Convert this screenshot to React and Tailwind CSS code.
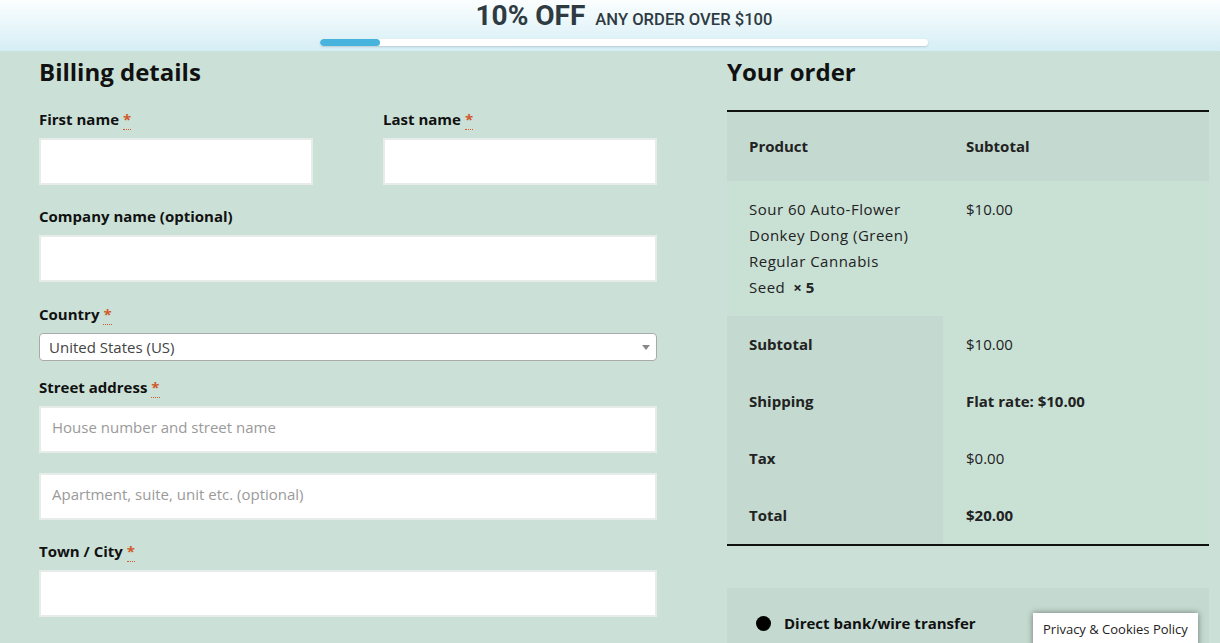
import React from "react";

const font = { fontFamily: '"Open Sans", "Liberation Sans", sans-serif' };

function Label({ children, req }) {
  return (
    <label className="block text-[15px] font-bold text-[#111] leading-[20px] mb-[9px]">
      {children}
      {req && (
        <span className="text-[#d1592a] ml-[4px] border-b border-dotted border-[#d1592a] leading-none">*</span>
      )}
    </label>
  );
}

function Input({ placeholder }) {
  return (
    <input
      placeholder={placeholder}
      className="block w-full h-[47px] bg-white border-2 border-[#e6ece9] px-[11px] pb-[5px] text-[15px] text-[#333] placeholder:text-[#9a9a9a] outline-none"
    />
  );
}

export default function App() {
  return (
    <div className="w-[1220px] h-[643px] overflow-hidden bg-[#cbe1d7] relative" style={font}>
      {/* Banner */}
      <div className="h-[51px] bg-gradient-to-b from-[#fbfeff] to-[#d5eef5] flex flex-col items-center pl-[28px]">
        <div className="flex items-baseline gap-[10px]" style={{ fontFamily: 'Roboto, sans-serif' }}>
          <span className="text-[28px] font-bold text-[#2e3b42] leading-[32px]">10% OFF</span>
          <span className="text-[16.6px] font-medium text-[#2e3b42] leading-[32px]">ANY ORDER OVER $100</span>
        </div>
        <div className="mt-[3px] w-[608px] h-[7px] bg-white rounded-full shadow-[0_1px_2px_rgba(0,0,0,0.15)] overflow-hidden">
          <div className="w-[60px] h-full bg-[#48b4de] rounded-full" />
        </div>
      </div>

      <div className="flex pl-[39px] pr-[11px]">
        {/* Billing */}
        <div className="w-[618px]">
          <h3 className="text-[24px] font-bold text-[#111] leading-[30px] mt-[6px] mb-[22px]">Billing details</h3>
          <div className="flex justify-between">
            <div className="w-[274px]">
              <Label req>First name</Label>
              <Input />
            </div>
            <div className="w-[274px]">
              <Label req>Last name</Label>
              <Input />
            </div>
          </div>
          <div className="mt-[21px]">
            <Label>Company name (optional)</Label>
            <Input />
          </div>
          <div className="mt-[22px]">
            <Label req>Country</Label>
            <div className="relative h-[28px] bg-white border border-[#aaa] rounded-[4px] flex items-center px-[9px]">
              <span className="text-[15px] text-[#444]">United States (US)</span>
              <span className="absolute right-[6px] top-[11px] w-0 h-0 border-l-[4px] border-r-[4px] border-t-[5px] border-l-transparent border-r-transparent border-t-[#888]" />
            </div>
          </div>
          <div className="mt-[16px]">
            <Label req>Street address</Label>
            <Input placeholder="House number and street name" />
            <div className="mt-[20px]">
              <Input placeholder="Apartment, suite, unit etc. (optional)" />
            </div>
          </div>
          <div className="mt-[21px]">
            <Label req>Town / City</Label>
            <Input />
          </div>
        </div>

        {/* Order */}
        <div className="ml-[70px] w-[482px]">
          <h3 className="text-[24px] font-bold text-[#111] leading-[30px] mt-[6px] mb-[23px]">Your order</h3>
          <table className="w-full border-t-2 border-b-2 border-[#111] text-[15px] text-[#222]">
            <thead>
              <tr className="bg-[#c4d9d0] h-[70px]">
                <th className="text-left font-bold pl-[22px] w-[216px]">Product</th>
                <th className="text-left font-bold pl-[23px]">Subtotal</th>
              </tr>
            </thead>
            <tbody>
              <tr className="bg-[#c9e0d5]">
                <td className="align-top pl-[22px] pr-[30px] pt-[15px] pb-[16px] leading-[26px] tracking-[0.5px]">
                  Sour 60 Auto-Flower Donkey Dong (Green) Regular Cannabis Seed
                  <strong className="tracking-normal ml-[8px]">× 5</strong>
                </td>
                <td className="align-top pl-[23px] pt-[15px] leading-[26px]">$10.00</td>
              </tr>
            </tbody>
            <tfoot>
              {[
                ["Subtotal", "$10.00", false, "h-[57px]"],
                ["Shipping", "Flat rate: $10.00", true, "h-[57px]"],
                ["Tax", "$0.00", false, "h-[57px]"],
                ["Total", "$20.00", true, "h-[58px]"],
              ].map(([k, v, b, h]) => (
                <tr key={k} className={h}>
                  <th className="text-left font-bold pl-[22px] bg-[#c4d9cf]">{k}</th>
                  <td className={"pl-[23px] bg-[#c9e0d5] " + (b ? "font-bold" : "")}>{v}</td>
                </tr>
              ))}
            </tfoot>
          </table>
          <div className="mt-[42px] bg-[#c4d9cf] h-[80px] pt-[24px] pl-[29px] flex items-start gap-[13px]">
            <span className="w-[15px] h-[15px] rounded-full bg-black mt-[4px]" />
            <span className="text-[15px] font-bold text-[#111]">Direct bank/wire transfer</span>
          </div>
        </div>
      </div>

      <div className="absolute left-[1033px] top-[613px] w-[165px] h-[40px] bg-white shadow-[0_0_6px_rgba(0,0,0,0.45)] px-[10px] pt-[7px] text-[13px] text-[#222] whitespace-nowrap">
        Privacy &amp; Cookies Policy
      </div>
    </div>
  );
}
